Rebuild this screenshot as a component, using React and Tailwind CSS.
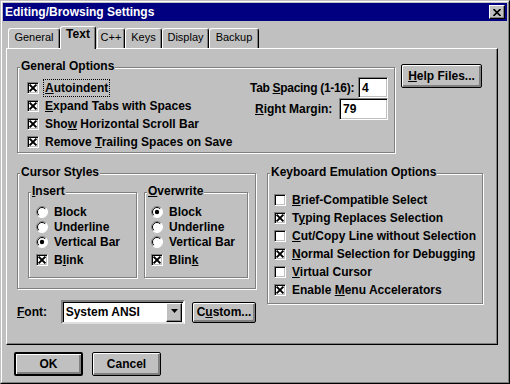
import React from "react";

const GRAY = "bg-[#c0c0c0]";

function CheckBox({ checked }) {
  return (
    <span className="relative inline-block w-[12px] h-[12px] shrink-0 bg-white border border-t-[#808080] border-l-[#808080] border-r-white border-b-white shadow-[inset_1px_1px_0_#000,inset_-1px_-1px_0_#c0c0c0]">
      {checked && (
        <svg className="absolute left-[-1px] top-[-1px]" width="12" height="12" viewBox="0 0 12 12">
          <path d="M2.6 2.6 L9.4 9.4 M9.4 2.6 L2.6 9.4" stroke="#000" strokeWidth="2" />
        </svg>
      )}
    </span>
  );
}

function Radio({ checked }) {
  return (
    <svg className="shrink-0" width="12" height="12" viewBox="0 0 12 12">
      <circle cx="6" cy="6" r="5.5" fill="#fff" />
      <path d="M2.1 9.9 A5.5 5.5 0 0 1 9.9 2.1" stroke="#808080" fill="none" />
      <path d="M9.9 2.1 A5.5 5.5 0 0 1 2.1 9.9" stroke="#fff" fill="none" />
      <path d="M2.8 9.2 A4.5 4.5 0 0 1 9.2 2.8" stroke="#000" fill="none" />
      {checked && <circle cx="6" cy="6" r="2.2" fill="#000" />}
    </svg>
  );
}

function CheckRow({ checked, children, h = "h-[18px]" }) {
  return (
    <div className={`${h} flex items-center gap-[6px]`}>
      <CheckBox checked={checked} />
      <span className="leading-[14px] whitespace-nowrap">{children}</span>
    </div>
  );
}

function RadioRow({ checked, children }) {
  return (
    <div className="h-[15px] flex items-center gap-[6px]">
      <Radio checked={checked} />
      <span className="leading-[14px] whitespace-nowrap">{children}</span>
    </div>
  );
}

function Group({ label, className, children }) {
  return (
    <div className={`relative shrink-0 border border-[#808080] shadow-[1px_1px_0_#fff,inset_1px_1px_0_#fff] ${className}`}>
      <div className="absolute left-[2px] top-[-9px] bg-[#c0c0c0] px-[1px] leading-[14px] whitespace-nowrap">{label}</div>
      {children}
    </div>
  );
}

function Btn({ children, className = "" }) {
  return (
    <div
      className={`flex items-center justify-center shrink-0 border-black rounded-[2px] bg-[#c0c0c0] shadow-[inset_1px_1px_0_#fff,inset_-2px_-2px_0_#808080] leading-[14px] ${className}`}
    >
      {children}
    </div>
  );
}

function Field({ children, className = "" }) {
  return (
    <div
      className={`flex items-center shrink-0 bg-white border border-t-[#808080] border-l-[#808080] border-r-white border-b-white shadow-[inset_1px_1px_0_#000,inset_-1px_-1px_0_#c0c0c0] pl-[3px] leading-[14px] ${className}`}
    >
      {children}
    </div>
  );
}

const TABS = [
  { name: "General", w: "w-[52px]" },
  { name: "Text", w: "w-[36px]", active: true },
  { name: "C++", w: "w-[28px] ml-[1px]" },
  { name: "Keys", w: "w-[37px]" },
  { name: "Display", w: "w-[47px]" },
  { name: "Backup", w: "w-[50px]" },
];

export default function App() {
  return (
    <div className="w-[510px] h-[384px] bg-[#c0c0c0] border border-t-[#c0c0c0] border-l-[#c0c0c0] border-r-black border-b-black font-['Liberation_Sans',Arial,sans-serif] text-[12px] font-bold text-black">
      <div className="h-full border border-t-white border-l-white border-r-[#808080] border-b-[#808080] p-[1px] flex flex-col">
        {/* title bar */}
        <div className="h-[18px] shrink-0 bg-[#000080] flex items-center justify-between pl-[2px] pr-[2px]">
          <span className="text-white leading-[14px]">Editing/Browsing Settings</span>
          <div className="w-[16px] h-[14px] bg-[#c0c0c0] border border-t-white border-l-white border-r-black border-b-black shadow-[inset_-1px_-1px_0_#808080] flex items-center justify-center">
            <svg width="8" height="7" viewBox="0 0 8 7">
              <path d="M0.5 0 L7.5 7 M7.5 0 L0.5 7" stroke="#000" strokeWidth="1.6" />
            </svg>
          </div>
        </div>

        {/* tabs + panel */}
        <div className="ml-[3px] mt-[5px]">
          <div className="relative z-10 flex items-end h-[22px] pl-[2px]">
            {TABS.map((t) =>
              t.active ? (
                <div
                  key={t.name}
                  className={`${t.w} h-[23px] -mb-[1px] ${GRAY} border-l border-t border-r border-l-white border-t-white border-r-black shadow-[inset_-1px_0_0_#808080] rounded-t-[3px] flex justify-center leading-[14px]`}
                >
                  {t.name}
                </div>
              ) : (
                <div
                  key={t.name}
                  className={`${t.w} h-[20px] border-l border-t border-r border-l-white border-t-white border-r-black shadow-[inset_-1px_0_0_#808080] rounded-t-[3px] flex justify-center pt-[2px] text-[11px] font-normal leading-[13px]`}
                >
                  {t.name}
                </div>
              )
            )}
          </div>

          <div className="w-[492px] h-[297px] border border-t-white border-l-white border-r-black border-b-black shadow-[inset_-1px_-1px_0_#808080] pl-[10px] pt-[15px]">
            {/* row 1 */}
            <div className="flex items-start">
              <Group label="General Options" className="w-[378px] h-[86px] mt-[3px]">
                <div className="flex justify-between">
                  <div className="pl-[9px] pt-[11px] flex flex-col">
                    <CheckRow checked>
                      <span className="outline-1 outline-dotted outline-black outline-offset-[1px]">
                        <u>A</u>utoindent
                      </span>
                    </CheckRow>
                    <CheckRow checked>
                      <u>E</u>xpand Tabs with Spaces
                    </CheckRow>
                    <CheckRow checked>
                      Sho<u>w</u> Horizontal Scroll Bar
                    </CheckRow>
                    <CheckRow checked>
                      Remove <u>T</u>railing Spaces on Save
                    </CheckRow>
                  </div>
                  <div className="pt-[9px] pr-[6px] flex flex-col">
                    <div className="w-[138px] h-[21px] flex items-center justify-between">
                      <span className="whitespace-nowrap tracking-[-0.3px]">
                        Tab <u>S</u>pacing (1-16):
                      </span>
                      <Field className="w-[30px] h-[21px]">4</Field>
                    </div>
                    <div className="w-[138px] h-[22px] flex items-center justify-between pl-[5px]">
                      <span className="whitespace-nowrap">
                        <u>R</u>ight Margin:
                      </span>
                      <Field className="w-[49px] h-[22px]">79</Field>
                    </div>
                  </div>
                </div>
              </Group>
              <Btn className="ml-[6px] w-[81px] h-[24px] border">
                <span>
                  <u>H</u>elp Files...
                </span>
              </Btn>
            </div>

            {/* row 2 */}
            <div className="flex items-start mt-[20px]">
              <div className="flex flex-col w-[239px]">
                <Group label="Cursor Styles" className="w-[239px] h-[116px]">
                  <div className="flex pl-[10px] pt-[18px]">
                    <Group label={<><u>I</u>nsert</>} className="w-[109px] h-[86px]">
                      <div className="pl-[7px] pt-[11px] flex flex-col">
                        <RadioRow>Block</RadioRow>
                        <RadioRow>Underline</RadioRow>
                        <RadioRow checked>Vertical Bar</RadioRow>
                        <div className="mt-[2px]">
                          <CheckRow checked>
                            B<u>l</u>ink
                          </CheckRow>
                        </div>
                      </div>
                    </Group>
                    <Group label={<><u>O</u>verwrite</>} className="ml-[7px] w-[104px] h-[86px]">
                      <div className="pl-[6px] pt-[11px] flex flex-col">
                        <RadioRow checked>Block</RadioRow>
                        <RadioRow>Underline</RadioRow>
                        <RadioRow>Vertical Bar</RadioRow>
                        <div className="mt-[2px]">
                          <CheckRow checked>
                            Blin<u>k</u>
                          </CheckRow>
                        </div>
                      </div>
                    </Group>
                  </div>
                </Group>

                <div className="flex items-center mt-[11px] h-[24px]">
                  <span className="w-[45px] leading-[14px]">
                    <u>F</u>ont:
                  </span>
                  <div className="w-[128px] h-[24px] bg-white border-2 border-t-[#808080] border-l-[#808080] border-r-white border-b-[#dfdfdf] shadow-[inset_1px_1px_0_#000] flex items-center justify-between pl-[3px] pr-[1px]">
                    <span className="leading-[14px]">System ANSI</span>
                    <div className="w-[16px] h-[19px] bg-[#c0c0c0] border border-t-white border-l-white border-r-black border-b-black shadow-[inset_-1px_-1px_0_#808080] flex flex-col items-center justify-center gap-[1px]">
                      <svg width="7" height="6" viewBox="0 0 7 6">
                        <path d="M0 0 H7 L3.5 4 Z" fill="#000" />
                      </svg>
                    </div>
                  </div>
                  <Btn className="ml-[7px] w-[64px] h-[21px] border">
                    <span>
                      C<u>u</u>stom...
                    </span>
                  </Btn>
                </div>
              </div>

              <Group label="Keyboard Emulation Options" className="ml-[11px] w-[216px] h-[131px]">
                <div className="pl-[6px] pt-[17px] flex flex-col">
                  <CheckRow>
                    <u>B</u>rief-Compatible Select
                  </CheckRow>
                  <CheckRow checked>
                    T<u>y</u>ping Replaces Selection
                  </CheckRow>
                  <CheckRow>
                    <u>C</u>ut/Copy Line without Selection
                  </CheckRow>
                  <CheckRow checked>
                    <u>N</u>ormal Selection for Debugging
                  </CheckRow>
                  <CheckRow>
                    <u>V</u>irtual Cursor
                  </CheckRow>
                  <CheckRow checked>
                    Enable <u>M</u>enu Accelerators
                  </CheckRow>
                </div>
              </Group>
            </div>
          </div>
        </div>

        {/* bottom buttons */}
        <div className="flex mt-[7px] ml-[11px]">
          <Btn className="w-[69px] h-[24px] border-2">OK</Btn>
          <Btn className="ml-[9px] w-[69px] h-[24px] border">Cancel</Btn>
        </div>
      </div>
    </div>
  );
}
